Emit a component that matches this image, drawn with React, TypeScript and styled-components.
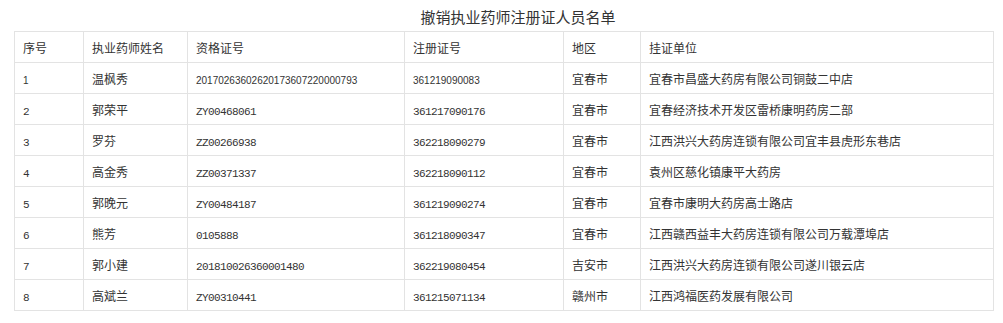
import styled, { createGlobalStyle } from 'styled-components';

const GlobalStyle = createGlobalStyle`
  body {
    margin: 0;
    background: #fff;
    font-family: "Noto Sans CJK SC", "Liberation Sans", sans-serif;
    color: #333;
  }
`;

type Row = { no: string, name: string, qual: string, reg: string, area: string, unit: string };

const rows: Row[] = [
  { no: '1', name: '温枫秀', qual: '20170263602620173607220000793', reg: '361219090083', area: '宜春市', unit: '宜春市昌盛大药房有限公司铜鼓二中店' },
  { no: '2', name: '郭荣平', qual: 'ZY00468061', reg: '361217090176', area: '宜春市', unit: '宜春经济技术开发区雷桥康明药房二部' },
  { no: '3', name: '罗芬', qual: 'ZZ00266938', reg: '362218090279', area: '宜春市', unit: '江西洪兴大药房连锁有限公司宜丰县虎形东巷店' },
  { no: '4', name: '高金秀', qual: 'ZZ00371337', reg: '362218090112', area: '宜春市', unit: '袁州区慈化镇康平大药房' },
  { no: '5', name: '郭晚元', qual: 'ZY00484187', reg: '361219090274', area: '宜春市', unit: '宜春市康明大药房高士路店' },
  { no: '6', name: '熊芳', qual: '0105888', reg: '361218090347', area: '宜春市', unit: '江西赣西益丰大药房连锁有限公司万载潭埠店' },
  { no: '7', name: '郭小建', qual: '201810026360001480', reg: '362219080454', area: '吉安市', unit: '江西洪兴大药房连锁有限公司遂川银云店' },
  { no: '8', name: '高斌兰', qual: 'ZY00310441', reg: '361215071134', area: '赣州市', unit: '江西鸿福医药发展有限公司' },
];

const widths = [69, 104, 217, 159, 77, 353];
const headers = ['序号', '执业药师姓名', '资格证号', '注册证号', '地区', '挂证单位'];

const Page = styled.div`
  padding: 0 0 0 14px;
  width: 980px;
`;

const Title = styled.div`
  height: 31px;
  line-height: 33px;
  font-size: 15px;
  text-align: center;
  padding-left: 28px;
  color: #333;
`;

const Table = styled.table`
  border-collapse: collapse;
  table-layout: fixed;
  width: 980px;
  font-size: 12px;
`;

const Cell = styled.td`
  border: 1px solid #e3e3e3;
  height: 31px;
  padding: 0 8px;
  box-sizing: border-box;
  vertical-align: middle;
  white-space: nowrap;
  color: #333;
  text-align: left;
  font-weight: normal;
`;

const Num = styled.span<{ $mono?: boolean }>`
  font-family: ${(p) => (p.$mono ? '"Liberation Mono", monospace' : '"Liberation Sans", sans-serif')};
  font-size: ${(p) => (p.$mono ? '11px' : '10px')};
  letter-spacing: ${(p) => (p.$mono ? '-0.6px' : '0')};
  color: #333;
`;

export default function App() {
  return (
    <Page>
      <GlobalStyle />
      <Title>撤销执业药师注册证人员名单</Title>
      <Table>
        <colgroup>
          {widths.map((w, i) => <col key={i} style={{ width: w }} />)}
        </colgroup>
        <tbody>
          <tr>
            {headers.map((h) => <Cell as="th" key={h}>{h}</Cell>)}
          </tr>
          {rows.map((r, i) => {
            const mono = i > 0;
            return (
              <tr key={r.no}>
                <Cell><Num $mono={mono}>{r.no}</Num></Cell>
                <Cell>{r.name}</Cell>
                <Cell><Num $mono={mono}>{r.qual}</Num></Cell>
                <Cell><Num $mono={mono}>{r.reg}</Num></Cell>
                <Cell>{r.area}</Cell>
                <Cell>{r.unit}</Cell>
              </tr>
            );
          })}
        </tbody>
      </Table>
    </Page>
  );
}
